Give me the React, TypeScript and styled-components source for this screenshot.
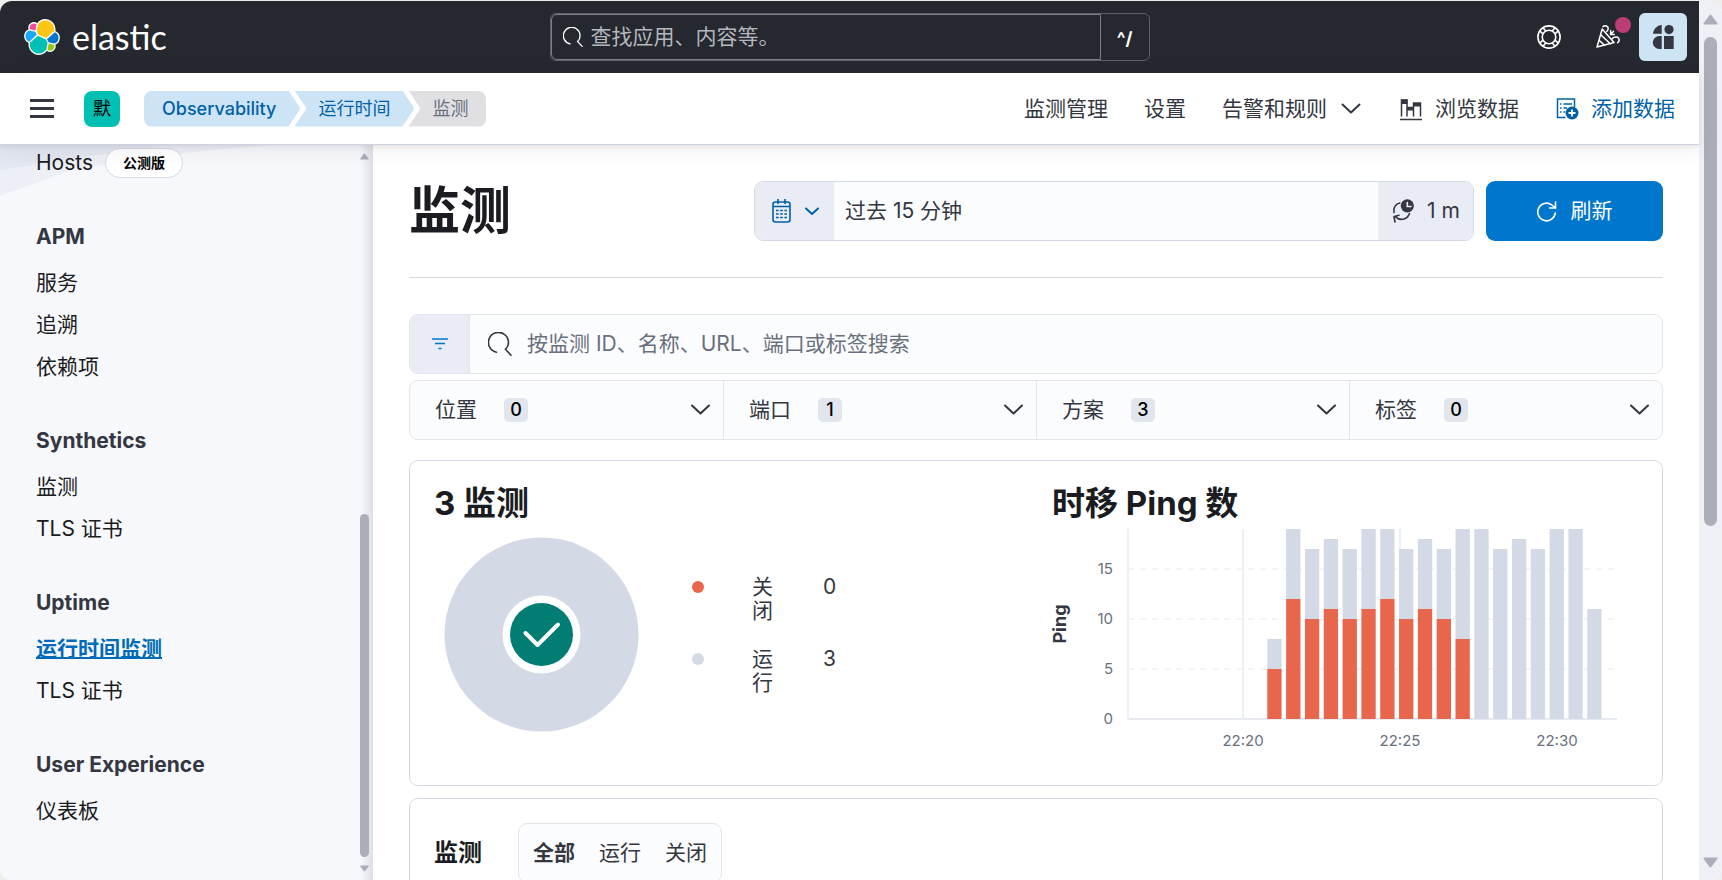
import React from "react";
import styled, { createGlobalStyle, css } from "styled-components";

const font = `Inter, "Noto Sans CJK SC", sans-serif`;

const c = {
  ink: "#1a1c21",
  text: "#343741",
  subdued: "#69707d",
  link: "#0061a6",
  primary: "#0077cc",
  border: "#d3dae6",
  softBorder: "#e2e5ea",
  field: "#fbfcfd",
  addon: "#e9ecf4",
  dark: "#25282f",
  thumb: "#abaeb8",
};

const GlobalStyle = createGlobalStyle`
  *, *::before, *::after { box-sizing: border-box; }
  body { margin: 0; background: #eeefed; font-family: ${font}; font-size: 21px; line-height: 24px; color: ${c.text}; }
  button, input { font: inherit; color: inherit; }
  button { cursor: pointer; margin: 0; padding: 0; border: 0; background: none; }
  a { color: inherit; text-decoration: none; }
  h1, h2, h3, ul { margin: 0; padding: 0; }
  ul { list-style: none; }
  svg { display: block; flex: none; }
`;

const Page = styled.div`
  height: 100vh;
  padding-top: 1px;
`;

const Frame = styled.div`
  display: grid;
  grid-template-columns: minmax(0, 1fr) 23px;
  height: 100%;
  border-radius: 12px;
  overflow: hidden;
  background: #fff;
`;

const Column = styled.div`
  display: flex;
  flex-direction: column;
  min-height: 0;
`;

/* Scrollbars */

const PageScrollbar = styled.div`
  display: flex;
  flex-direction: column;
  align-items: center;
  justify-content: space-between;
  padding: 13px 0 12px;
  background: #eff0f5;
`;

const ScrollTop = styled.div`
  display: flex;
  flex-direction: column;
  align-items: center;
  gap: 12px;
  height: 60%;
`;

const PageThumb = styled.div`
  width: 13px;
  flex: 1;
  border-radius: 7px;
  background: ${c.thumb};
`;

const SideScrollbar = styled.div`
  position: absolute;
  top: 8px;
  right: 4px;
  bottom: 8px;
  width: 9px;
  display: flex;
  flex-direction: column;
  align-items: center;
  gap: 8px;
`;

const SideThumb = styled.div`
  width: 9px;
  flex: 1;
  border-radius: 5px;
  background: ${c.thumb};
`;

const SideTrack = styled.div`
  height: 47%;
`;

/* Top header */

const Header = styled.header`
  display: grid;
  grid-template-columns: 1fr minmax(300px, 600px) 1fr;
  align-items: center;
  flex: none;
  height: 72px;
  padding: 0 12px;
  background: ${c.dark};
  color: #fff;
`;

const Brand = styled.a`
  display: flex;
  align-items: center;
  gap: 12px;
  padding-left: 12px;
  font-family: Lato, sans-serif;
  font-weight: 400;
  font-size: 34px;
  line-height: 36px;
`;

const GlobalSearch = styled.div`
  display: flex;
  height: 48px;
  border: 1px solid #5d6068;
  border-radius: 6px;
  overflow: hidden;
`;

const GlobalField = styled.label`
  display: flex;
  align-items: center;
  gap: 8px;
  flex: 1;
  min-width: 0;
  padding-left: 11px;
  border: 1px solid #7b7e85;
  border-radius: 6px 0 0 6px;
`;

const BareInput = styled.input<{ $tone: string }>`
  flex: 1;
  min-width: 0;
  padding: 0;
  border: 0;
  outline: 0;
  background: none;
  &::placeholder { color: ${(p) => p.$tone}; opacity: 1; }
`;

const Shortcut = styled.div`
  display: flex;
  align-items: center;
  justify-content: center;
  width: 48px;
  padding-top: 4px;
  font-size: 18px;
  font-weight: 700;
`;

const HeaderActions = styled.div`
  display: flex;
  align-items: center;
  justify-content: flex-end;
  gap: 12px;
`;

const IconButton = styled.button<{ $filled?: boolean }>`
  position: relative;
  display: flex;
  align-items: center;
  justify-content: center;
  width: 48px;
  height: 48px;
  border-radius: 6px;
  ${(p) => p.$filled && css`background: #cde4f5; color: ${c.text};`}
`;

const ActionPair = styled.div`
  display: flex;
  align-items: center;
  gap: 6px;
`;

const Dot = styled.span`
  position: absolute;
  top: 4px;
  right: 2px;
  width: 16px;
  height: 16px;
  border-radius: 50%;
  background: #bc3d75;
`;

/* Second bar */

const SubHeader = styled.div`
  position: relative;
  z-index: 2;
  display: flex;
  align-items: center;
  flex: none;
  height: 72px;
  padding: 0 24px;
  background: #fff;
  border-bottom: 1px solid #cdd3e1;
  box-shadow: 0 2px 4px rgba(60, 50, 60, 0.08), 0 6px 18px rgba(60, 50, 50, 0.08);
`;

const MenuButton = styled.button`
  display: grid;
  gap: 5px;
  width: 36px;
  padding: 0 6px;
  margin-right: 24px;
`;

const MenuLine = styled.span`
  height: 3px;
  background: ${c.text};
`;

const Space = styled.button`
  width: 36px;
  height: 36px;
  margin-right: 24px;
  border-radius: 8px;
  background: #00bfb3;
  color: #000;
  font-size: 18px;
`;

const Crumbs = styled.nav`
  display: flex;
  flex: 1;
`;

const Crumb = styled.a<{ $place: "first" | "middle" | "last" }>`
  height: 36px;
  font-size: 18px;
  line-height: 36px;
  white-space: nowrap;
  background: #cde3f6;
  color: ${c.link};
  padding: 0 24px;
  margin-left: -6px;
  ${(p) =>
    p.$place === "first" &&
    css`
      margin-left: 0;
      padding-left: 18px;
      font-weight: 500;
      border-radius: 8px 0 0 8px;
      clip-path: polygon(0 0, calc(100% - 12px) 0, 100% 50%, calc(100% - 12px) 100%, 0 100%);
    `}
  ${(p) =>
    p.$place === "middle" &&
    css`
      clip-path: polygon(0 0, calc(100% - 12px) 0, 100% 50%, calc(100% - 12px) 100%, 0 100%, 12px 50%);
    `}
  ${(p) =>
    p.$place === "last" &&
    css`
      padding-right: 18px;
      border-radius: 0 8px 8px 0;
      background: #e0e0e3;
      color: ${c.subdued};
      clip-path: polygon(0 0, 100% 0, 100% 100%, 0 100%, 12px 50%);
    `}
`;

const Tools = styled.nav`
  display: flex;
  align-items: center;
  gap: 36px;
`;

const Tool = styled.a<{ $accent?: boolean }>`
  display: flex;
  align-items: center;
  gap: 12px;
  white-space: nowrap;
  color: ${(p) => (p.$accent ? c.link : c.text)};
`;

/* Body */

const Body = styled.div`
  display: flex;
  flex: 1;
  min-height: 0;
`;

const Sidebar = styled.aside`
  position: relative;
  flex: none;
  width: 373px;
  padding-left: 36px;
  overflow: hidden;
  background: linear-gradient(90deg, #f7f8fc 360px, #dcdfe6 373px);
`;

const Facets = styled.svg`
  position: absolute;
  top: 0;
  left: 0;
`;

const HostRow = styled.div`
  position: relative;
  display: flex;
  align-items: center;
  gap: 12px;
  height: 35px;
  margin-bottom: 4px;
  color: ${c.ink};
`;

const Beta = styled.span`
  height: 30px;
  padding: 0 17px;
  border: 1px solid ${c.border};
  border-radius: 15px;
  background: #fff;
  color: #000;
  font-size: 14px;
  line-height: 28px;
  font-weight: 700;
`;

const NavGroup = styled.section`
  padding-top: 28px;
`;

const NavTitle = styled.h3`
  font-size: 21px;
  line-height: 50px;
  font-weight: 700;
`;

const NavLink = styled.a<{ $active?: boolean }>`
  display: block;
  line-height: 42px;
  color: ${c.ink};
  ${(p) =>
    p.$active &&
    css`
      color: #006bb8;
      font-weight: 700;
      text-decoration: underline;
      text-decoration-thickness: 2px;
    `}
`;

const Main = styled.main`
  flex: 1;
  min-width: 0;
  padding: 36px;
  overflow: hidden;
`;

const TitleRow = styled.div`
  display: flex;
  align-items: center;
  gap: 12px;
  padding-bottom: 36px;
  margin-bottom: 36px;
  border-bottom: 1px solid ${c.border};
`;

const PageTitle = styled.h1`
  flex: 1;
  font-size: 51px;
  line-height: 60px;
  font-weight: 700;
  color: ${c.ink};
`;

const DatePicker = styled.div`
  display: flex;
  flex: 0 1 720px;
  height: 60px;
  border: 1px solid ${c.border};
  border-radius: 9px;
  background: ${c.field};
  overflow: hidden;
`;

const DateAddon = styled.button<{ $width: number; $tone: string }>`
  display: flex;
  align-items: center;
  justify-content: center;
  gap: 12px;
  width: ${(p) => p.$width}px;
  background: ${c.addon};
  color: ${(p) => p.$tone};
`;

const DateValue = styled.button`
  flex: 1;
  padding: 0 11px;
  text-align: left;
`;

const Refresh = styled.button`
  display: flex;
  align-items: center;
  justify-content: center;
  gap: 14px;
  width: 177px;
  height: 60px;
  border-radius: 9px;
  background: ${c.primary};
  color: #fff;
`;

const SearchBar = styled.div`
  display: flex;
  height: 60px;
  margin-bottom: 6px;
  border: 1px solid ${c.softBorder};
  border-radius: 9px;
  background: ${c.field};
  overflow: hidden;
`;

const FilterButton = styled.button`
  display: flex;
  align-items: center;
  justify-content: center;
  width: 60px;
  background: ${c.addon};
  border-right: 1px solid ${c.softBorder};
  color: ${c.primary};
`;

const SearchField = styled.label`
  display: flex;
  align-items: center;
  gap: 15px;
  flex: 1;
  padding: 0 18px;
`;

const FilterGroup = styled.div`
  display: grid;
  grid-template-columns: repeat(4, 1fr);
  height: 60px;
  margin-bottom: 20px;
  border: 1px solid ${c.softBorder};
  border-radius: 9px;
  background: ${c.field};
`;

const Filter = styled.button`
  display: flex;
  align-items: center;
  padding: 0 13px 0 25px;
  & + & { border-left: 1px solid ${c.softBorder}; }
  svg { margin-left: auto; }
`;

const Count = styled.span`
  width: 24px;
  height: 24px;
  margin-left: 27px;
  border-radius: 5px;
  background: #e0e5ee;
  color: #000;
  font-size: 18px;
  line-height: 24px;
  font-weight: 500;
`;

const Panel = styled.section`
  padding: 24px;
  margin-bottom: 12px;
  border: 1px solid ${c.border};
  border-radius: 9px;
`;

const Halves = styled.div`
  display: grid;
  grid-template-columns: 1fr 1fr;
  gap: 32px;
  height: 276px;
`;

const PanelTitle = styled.h2`
  font-size: 33px;
  line-height: 36px;
  font-weight: 700;
  color: ${c.ink};
`;

const Snapshot = styled.div`
  display: flex;
  align-items: center;
  gap: 53px;
  padding: 16px 0 0 10px;
`;

const Legend = styled.table`
  border-collapse: collapse;
  td { padding: 0; vertical-align: top; }
  tr + tr td { padding-top: 24px; }
`;

const LegendDot = styled.span<{ $color: string }>`
  display: block;
  width: 12px;
  height: 12px;
  margin: 6px 48px 6px 0;
  border-radius: 50%;
  background: ${(p) => p.$color};
`;

const LegendName = styled.span`
  display: block;
  width: 21px;
  margin-right: 50px;
`;

const ListHead = styled.div`
  display: flex;
  align-items: center;
  gap: 36px;
`;

const ListTitle = styled.h3`
  font-size: 24px;
  line-height: 36px;
  font-weight: 700;
  color: ${c.ink};
`;

const Segments = styled.div`
  display: flex;
  height: 60px;
  padding: 0 2px;
  border: 1px solid ${c.softBorder};
  border-radius: 9px;
  background: ${c.field};
`;

const Segment = styled.button<{ $on?: boolean }>`
  padding: 0 12px;
  font-weight: ${(p) => (p.$on ? 700 : 400)};
`;

/* Drawings */

const shards = [
  ["#fec514", "M12.58 13.79l7 3.2 7.07-6.19a7.92 7.92 0 00-6.5-9.39 7.9 7.9 0 00-7.65 3.4l-1.18 6.1z"],
  ["#00bfb3", "M5.33 21.22a7.98 7.98 0 0014.46 5.98l1.16-6.08-1.56-2.98-7.03-3.2z"],
  ["#f04e98", "M5.29 9.1l4.8 1.13 1.05-5.46A3.79 3.79 0 005.29 9.1z"],
  ["#1ba9f5", "M4.87 10.24a5.28 5.28 0 00-.24 9.9l6.73-6.08-1.24-2.64z"],
  ["#93c90e", "M20.87 27.23a3.77 3.77 0 005.84-4.3l-4.79-1.12z"],
  ["#0077cc", "M21.85 20.56l5.28 1.23a5.3 5.3 0 00.24-9.91l-6.91 6.05z"],
];

const Logo = () => (
  <svg width="36" height="36" viewBox="0 0 32 32" aria-hidden="true">
    {shards.map(([color, d]) => (
      <path key={color} d={d} fill="#fff" stroke="#fff" strokeWidth="2.4" strokeLinejoin="round" />
    ))}
    {shards.map(([color, d]) => (
      <path key={color} d={d} fill={color} />
    ))}
  </svg>
);

const Magnifier = ({ size }: { size: number }) => (
  <svg width={size} height={size} viewBox="0 0 24 24" fill="none" stroke="currentColor" strokeWidth="1.6" strokeLinecap="round">
    <path d="M8.5 20.2A10 10 0 1 1 17.6 17.4M17.4 17.2l5.6 6" />
  </svg>
);

/* The arrow is centred in a box that may be wider than the arrow itself. */
const Chevron = ({ width, box = width }: { width: number; box?: number }) => {
  const h = width / 2 + 2;
  return (
    <svg width={box} height={h} viewBox={`${(width - box) / 2} 0 ${box} ${h}`} fill="none" stroke="currentColor" strokeWidth="2" strokeLinecap="round" strokeLinejoin="round">
      <path d={`M1 1.5L${width / 2} ${width / 2}L${width - 1} 1.5`} />
    </svg>
  );
};

const HelpIcon = () => (
  <svg width="24" height="24" viewBox="0 0 24 24" fill="none" stroke="currentColor" strokeWidth="1.6">
    <circle cx="12" cy="12" r="11.1" />
    <circle cx="12" cy="12" r="6.8" />
    <path d="M6.2 3l2.6 3M3 6.2l3 2.6M17.8 3l-2.6 3M21 6.2l-3 2.6M6.2 21l2.6-3M3 17.800l3-2.600M17.8 21l-2.600-3M21 17.800l-3-2.600" />
  </svg>
);

const PartyIcon = () => (
  <svg width="26" height="24" viewBox="0 0 26 24" fill="none" stroke="currentColor" strokeWidth="1.5" strokeLinecap="round" strokeLinejoin="round">
    <path d="M6.2 4L1 22l17-4.4zM5 10l9.500 9M3.400 15.600l5.200 4.600M7 1.600c2-1.600 5-.6 5.200 1.600 0 1.600-.8 2.400-1.400 3.200M14.600 5.400v4h3.600M14.600 9.400l2.800-3M16.500 13.500c1.800-1.600 4.600-2 6-.4 1.300 1.600 .6 3.400-.9 4.700" />
  </svg>
);

const AssistantIcon = () => (
  <svg width="22" height="24" viewBox="0 0 22 24" fill="currentColor">
    <path d="M9.7 0v8.800H1C1.500 4 5 .3 9.700 0zM9.700 11v13H7.300a6.500 6.500 0 0 1 0-13z" />
    <circle cx="17" cy="4.6" r="4.6" />
    <path d="M12 11h9.700v13H12z" />
  </svg>
);

const ExploreIcon = () => (
  <svg width="24" height="24" viewBox="0 0 24 24" fill="none" stroke="currentColor" strokeWidth="1.5">
    <path d="M2.500 19.500V3h5.500v16.500M8 10.500h6.500v9M14.500 19.500V6h7v13.500M14.500 10.500v9M1 22.500h22" />
    <path d="M2 2.500h6.500V7H2zM8 10h7v3.500H8zM14 6h8v3.500h-8z" fill="currentColor" stroke="none" />
  </svg>
);

const AddDataIcon = () => (
  <svg width="24" height="24" viewBox="0 0 24 24" fill="none" stroke="currentColor" strokeWidth="1.5">
    <path d="M10.500 20.500h-8V2h17v8" />
    <path d="M5 7h1.500M5 11h1.500M5 15h1.500M8.500 7H17M8.500 11H12M8.500 15h1.500" />
    <circle cx="17" cy="16" r="6.5" fill="currentColor" stroke="none" />
    <path d="M13.500 16h7M17 12.500v7" stroke="#fff" strokeWidth="1.8" />
  </svg>
);

const CalendarIcon = () => (
  <svg width="22" height="24" viewBox="0 0 22 24" fill="none" stroke="currentColor" strokeWidth="1.6">
    <rect x="2" y="3" width="17" height="20" rx="2.5" />
    <path d="M2 7.500h17M7 0v5M14 0v5" />
    <path d="M5 11.500h11M5 15h11M5 18.500h11" strokeDasharray="2.6 1.600" />
  </svg>
);

const AutoRefreshIcon = () => (
  <svg width="24" height="24" viewBox="0 0 24 24" fill="none" stroke="currentColor" strokeWidth="1.6" strokeLinecap="round">
    <path d="M3 13.500C2 9 4.500 5 8.800 4M18.500 14.500c-2 5.500-8.500 8.200-14 3.300M4 23l-1-5.500 5-1.200" />
    <circle cx="16.3" cy="6.8" r="6.6" fill="currentColor" stroke="none" />
    <path d="M16.300 3.500v4H20" stroke="#e9ecf4" />
  </svg>
);

const RefreshIcon = () => (
  <svg width="20" height="21" viewBox="0 0 20 21" fill="none" stroke="currentColor" strokeWidth="1.6" strokeLinecap="round">
    <path d="M18.300 12A8.800 8.800 0 1 1 15.500 4.500L18 6.500M18.500 1v6h-6" />
  </svg>
);

const FilterIcon = () => (
  <svg width="16" height="12" viewBox="0 0 16 12" stroke="currentColor" strokeWidth="1.6">
    <path d="M0 1h16M3 5.500h10M6.500 10.500h3" />
  </svg>
);

const Triangle = ({ size, down }: { size: number; down?: boolean }) => (
  <svg width={size} height={Math.round(size * 0.75)} viewBox="0 0 15 11" fill={c.thumb} stroke={c.thumb} strokeWidth="2" strokeLinejoin="round">
    <path d={down ? "M1.500 1.500h12l-6 8z" : "M1.500 9.500h12l-6-8z"} />
  </svg>
);

const Donut = () => (
  <svg width="195" height="195" viewBox="0 0 195 195" role="img" aria-label="3 / 3">
    <circle cx="97.5" cy="97.5" r="97" fill="#d3dae6" />
    <circle cx="97.5" cy="97.5" r="39" fill="#fff" />
    <circle cx="97.5" cy="97.5" r="31.5" fill="#017d73" />
    <path d="M81.500 96l12 12 20.500-20.500" fill="none" stroke="#fff" strokeWidth="4" strokeLinecap="round" strokeLinejoin="round" />
  </svg>
);

const total = [8, 19, 17, 18, 17, 19, 19, 17, 18, 17, 19, 19, 17, 18, 17, 19, 19, 11];
const failed = [5, 12, 10, 11, 10, 11, 12, 10, 11, 10, 8, 0, 0, 0, 0, 0, 0, 0];
const UNIT = 10;
const BASE = 198;
const PITCH = 18.82;

const Chart = styled.svg`
  width: 100%;
  height: 230px;
  overflow: visible;
  font-family: ${font};
  font-size: 15px;
  fill: ${c.subdued};
`;

const PingChart = () => (
  <Chart viewBox="0 0 585 230" preserveAspectRatio="xMinYMin meet">
    {[0, 5, 10, 15].map((v) => (
      <g key={v}>
        <line x1="76" x2="565" y1={BASE - v * UNIT} y2={BASE - v * UNIT} stroke="#e7eaf1" strokeWidth={v ? 1 : 2} strokeDasharray={v ? "6 6" : undefined} />
        <text x="61" y={BASE - v * UNIT + 5} textAnchor="end">{v}</text>
      </g>
    ))}
    {[76, 191, 348].map((x) => (
      <line key={x} x1={x} x2={x} y1="8" y2={BASE} stroke="#eceff6" strokeWidth="2" />
    ))}
    {total.map((t, i) => (
      <g key={i}>
        <rect x={215.3 + i * PITCH} y={BASE - t * UNIT} width="14.3" height={(t - failed[i]) * UNIT} fill="#d3dae6" />
        <rect x={215.3 + i * PITCH} y={BASE - failed[i] * UNIT} width="14.3" height={failed[i] * UNIT} fill="#e7664c" />
      </g>
    ))}
    {["22:20", "22:25", "22:30"].map((t, i) => (
      <text key={t} x={191 + i * 157} y="225" textAnchor="middle">{t}</text>
    ))}
    <text transform="translate(14 103) rotate(-90)" textAnchor="middle" fontSize="18" fontWeight="700" fill={c.text}>Ping</text>
  </Chart>
);

/* Data */

const groups = [
  { title: "APM", items: ["服务", "追溯", "依赖项"] },
  { title: "Synthetics", items: ["监测", "TLS 证书"] },
  { title: "Uptime", items: ["运行时间监测", "TLS 证书"], active: 0 },
  { title: "User Experience", items: ["仪表板"] },
];

const filters: [string, number][] = [["位置", 0], ["端口", 1], ["方案", 3], ["标签", 0]];

export default function App() {
  return (
    <Page>
      <GlobalStyle />
      <Frame>
        <Column>
          <Header>
            <Brand href="#"><Logo />elastic</Brand>
            <GlobalSearch>
              <GlobalField>
                <Magnifier size={20} />
                <BareInput $tone="#b4b7bd" placeholder="查找应用、内容等。" aria-label="查找应用、内容等。" />
              </GlobalField>
              <Shortcut>^/</Shortcut>
            </GlobalSearch>
            <HeaderActions>
              <IconButton aria-label="帮助"><HelpIcon /></IconButton>
              <ActionPair>
                <IconButton aria-label="新闻"><PartyIcon /><Dot /></IconButton>
                <IconButton $filled aria-label="助手"><AssistantIcon /></IconButton>
              </ActionPair>
            </HeaderActions>
          </Header>
          <SubHeader>
            <MenuButton aria-label="菜单"><MenuLine /><MenuLine /><MenuLine /></MenuButton>
            <Space>默</Space>
            <Crumbs>
              <Crumb $place="first" href="#">Observability</Crumb>
              <Crumb $place="middle" href="#">运行时间</Crumb>
              <Crumb $place="last" href="#">监测</Crumb>
            </Crumbs>
            <Tools>
              <Tool href="#">监测管理</Tool>
              <Tool href="#">设置</Tool>
              <Tool href="#">告警和规则<Chevron width={19} box={24} /></Tool>
              <Tool href="#"><ExploreIcon />浏览数据</Tool>
              <Tool href="#" $accent><AddDataIcon />添加数据</Tool>
            </Tools>
          </SubHeader>
          <Body>
            <Sidebar>
              <Facets width="280" height="54" viewBox="0 0 280 54">
                <path d="M0 0H270L183 8 75 24 0 51z" fill="#eceff6" />
                <path d="M0 0H165L110 8 0 25z" fill="#e3e7f0" />
              </Facets>
              <HostRow><a href="#">Hosts</a><Beta>公测版</Beta></HostRow>
              {groups.map((g) => (
                <NavGroup key={g.title}>
                  <NavTitle>{g.title}</NavTitle>
                  <ul>
                    {g.items.map((item, i) => (
                      <li key={item}><NavLink href="#" $active={g.active === i}>{item}</NavLink></li>
                    ))}
                  </ul>
                </NavGroup>
              ))}
              <SideScrollbar>
                <Triangle size={9} />
                <SideTrack />
                <SideThumb />
                <Triangle size={9} down />
              </SideScrollbar>
            </Sidebar>
            <Main>
              <TitleRow>
                <PageTitle>监测</PageTitle>
                <DatePicker>
                  <DateAddon $width={79} $tone={c.link} aria-label="日期快速选择"><CalendarIcon /><Chevron width={14} /></DateAddon>
                  <DateValue>过去 15 分钟</DateValue>
                  <DateAddon $width={95} $tone={c.text}><AutoRefreshIcon />1 m</DateAddon>
                </DatePicker>
                <Refresh><RefreshIcon />刷新</Refresh>
              </TitleRow>
              <SearchBar>
                <FilterButton aria-label="筛选"><FilterIcon /></FilterButton>
                <SearchField>
                  <Magnifier size={24} />
                  <BareInput $tone={c.subdued} placeholder="按监测 ID、名称、URL、端口或标签搜索" aria-label="按监测 ID、名称、URL、端口或标签搜索" />
                </SearchField>
              </SearchBar>
              <FilterGroup>
                {filters.map(([name, n]) => (
                  <Filter key={name}>{name}<Count>{n}</Count><Chevron width={19} /></Filter>
                ))}
              </FilterGroup>
              <Panel>
                <Halves>
                  <div>
                    <PanelTitle>3 监测</PanelTitle>
                    <Snapshot>
                      <Donut />
                      <Legend>
                        <tbody>
                          <tr><td><LegendDot $color="#e7664c" /></td><td><LegendName>关闭</LegendName></td><td>0</td></tr>
                          <tr><td><LegendDot $color="#d3dae6" /></td><td><LegendName>运行</LegendName></td><td>3</td></tr>
                        </tbody>
                      </Legend>
                    </Snapshot>
                  </div>
                  <div>
                    <PanelTitle>时移 Ping 数</PanelTitle>
                    <PingChart />
                  </div>
                </Halves>
              </Panel>
              <Panel>
                <ListHead>
                  <ListTitle>监测</ListTitle>
                  <Segments>
                    <Segment $on>全部</Segment>
                    <Segment>运行</Segment>
                    <Segment>关闭</Segment>
                  </Segments>
                </ListHead>
              </Panel>
            </Main>
          </Body>
        </Column>
        <PageScrollbar>
          <ScrollTop>
            <Triangle size={15} />
            <PageThumb />
          </ScrollTop>
          <Triangle size={15} down />
        </PageScrollbar>
      </Frame>
    </Page>
  );
}
